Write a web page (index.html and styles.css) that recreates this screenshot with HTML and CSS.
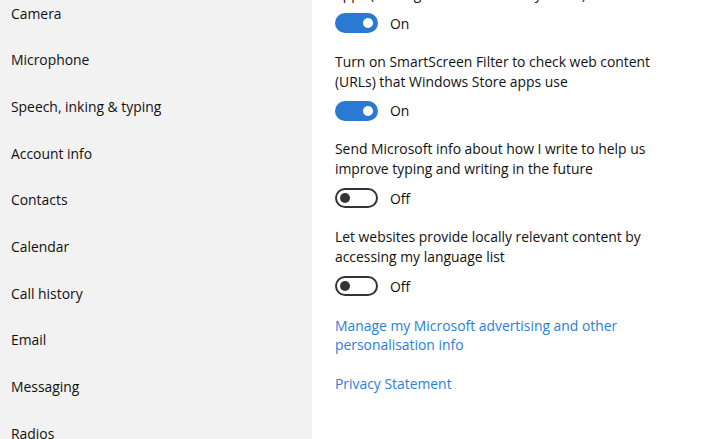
FILE: index.html
```html
<!DOCTYPE html>
<html lang="en">
<head>
  <meta charset="UTF-8">
  <title>Privacy</title>
  <link rel="stylesheet" href="styles.css">
</head>
<body>
  <div class="sidebar">
    <ul class="nav-list">
      <li>Camera</li>
      <li>Microphone</li>
      <li>Speech, inking &amp; typing</li>
      <li>Account info</li>
      <li>Contacts</li>
      <li>Calendar</li>
      <li>Call history</li>
      <li>Email</li>
      <li>Messaging</li>
      <li>Radios</li>
    </ul>
  </div>

  <div class="content">
    <div class="setting">
      <p>Let apps use my advertising ID for experiences across<br>apps (turning this off will reset your ID)</p>
      <div class="toggle-row">
        <span class="toggle on"><span class="knob"></span></span>
        <span class="state">On</span>
      </div>
    </div>

    <div class="setting">
      <p>Turn on SmartScreen Filter to check web content<br>(URLs) that Windows Store apps use</p>
      <div class="toggle-row">
        <span class="toggle on"><span class="knob"></span></span>
        <span class="state">On</span>
      </div>
    </div>

    <div class="setting">
      <p>Send Microsoft info about how I write to help us<br>improve typing and writing in the future</p>
      <div class="toggle-row">
        <span class="toggle"><span class="knob"></span></span>
        <span class="state">Off</span>
      </div>
    </div>

    <div class="setting">
      <p>Let websites provide locally relevant content by<br>accessing my language list</p>
      <div class="toggle-row">
        <span class="toggle"><span class="knob"></span></span>
        <span class="state">Off</span>
      </div>
    </div>

    <a class="link" href="#">Manage my Microsoft advertising and other<br>personalisation info</a>
    <a class="link" href="#">Privacy Statement</a>
  </div>
</body>
</html>
```

FILE: styles.css
```css
html, body {
  height: 439px;
  overflow: hidden;
}
body {
  margin: 0;
  display: flex;
  font-family: "Open Sans", "Noto Sans", sans-serif;
  font-size: 13.9px;
  color: #111;
  background-color: #fff;
}
.sidebar {
  width: 312px;
  flex-shrink: 0;
  background-color: #f2f2f2;
}
.nav-list {
  list-style: none;
  margin: -10px 0 0 0;
  padding: 0 0 0 11px;
}
.nav-list li {
  height: 46.67px;
  display: flex;
  align-items: center;
}
.content {
  padding-left: 23px;
  margin-top: -36px;
  display: flex;
  flex-direction: column;
  align-items: flex-start;
}
.setting p {
  margin: 0;
  line-height: 20px;
}
.toggle-row {
  display: flex;
  align-items: center;
  margin-top: 9px;
  margin-bottom: 18.7px;
  height: 20px;
}
.toggle {
  box-sizing: border-box;
  width: 43px;
  height: 20px;
  border-radius: 10px;
  border: 2px solid #333;
  display: flex;
  align-items: center;
  padding-left: 3px;
}
.toggle .knob {
  width: 10px;
  height: 10px;
  border-radius: 50%;
  background-color: #333;
}
.toggle.on {
  background-color: #2a7ad3;
  border-color: #2a7ad3;
  justify-content: flex-end;
  padding-left: 0;
  padding-right: 3px;
}
.toggle.on .knob {
  background-color: #fff;
}
.state {
  margin-left: 12px;
}
.link {
  color: #2b80d6;
  text-decoration: none;
  line-height: 19.5px;
  margin-top: 1px;
  margin-bottom: 18px;
}
```
